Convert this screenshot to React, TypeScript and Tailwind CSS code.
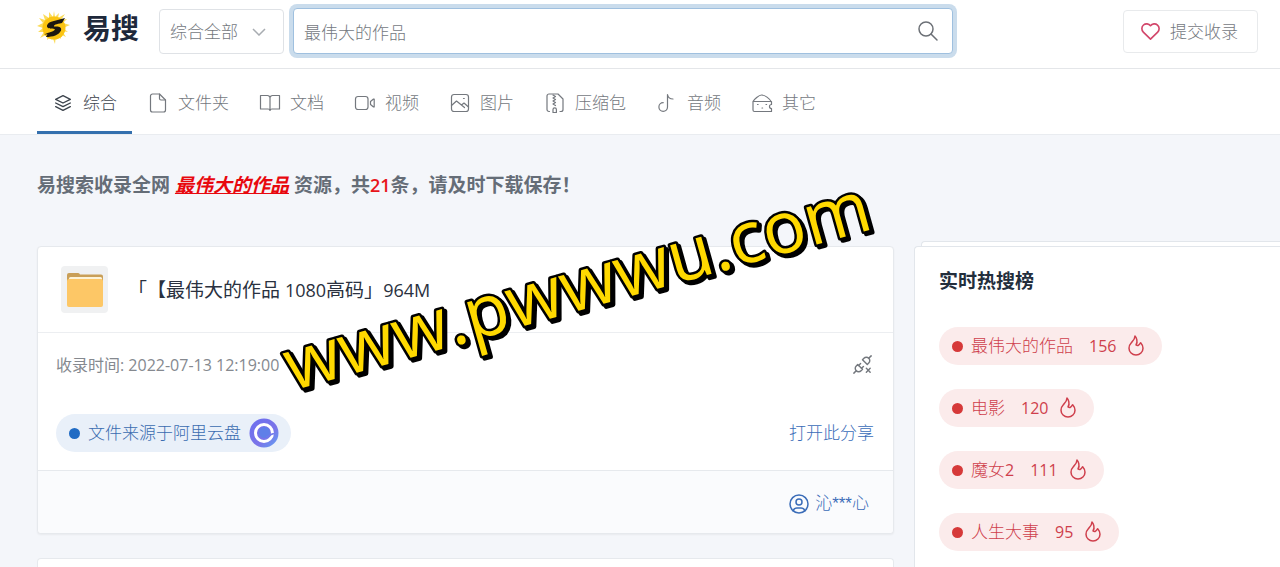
import React from "react";
import {
  TbFlame,
  TbHeart,
  TbPlugConnectedX,
  TbSearch,
  TbStack2,
  TbUserCircle,
} from "react-icons/tb";

const Line = ({ children }: { children: React.ReactNode }) => (
  <svg
    viewBox="0 0 24 24"
    className="h-6 w-6 -mx-0.5 shrink-0"
    fill="none"
    stroke="currentColor"
    strokeWidth="1.2"
    strokeLinecap="round"
    strokeLinejoin="round"
    aria-hidden="true"
  >
    {children}
  </svg>
);

const tabs: { label: string; icon: React.ReactNode }[] = [
  { label: "综合", icon: <TbStack2 size={22} strokeWidth={1.5} className="-mx-px shrink-0" /> },
  {
    label: "文件夹",
    icon: (
      <Line>
        <path d="M13.5 3H6.5a2 2 0 0 0-2 2v14a2 2 0 0 0 2 2h11a2 2 0 0 0 2-2V9z" />
        <path d="M13.5 3v4.500a1.500 1.500 0 0 0 1.500 1.500h4.500" />
      </Line>
    ),
  },
  {
    label: "文档",
    icon: (
      <Line>
        <path d="M2.500 4.500h7a2.500 2.500 0 0 1 2.500 2.500v12.500a2 2 0 0 0-2-1.500H2.500zM21.500 4.500h-7A2.500 2.500 0 0 0 12 7v12.500a2 2 0 0 1 2-1.500h7.500z" />
      </Line>
    ),
  },
  {
    label: "视频",
    icon: (
      <Line>
        <rect x="2.500" y="5.500" width="12.500" height="13" rx="2.500" />
        <path d="M17.500 10.500l3-2.500h.7v8h-.7l-3-2.500z" />
      </Line>
    ),
  },
  {
    label: "图片",
    icon: (
      <Line>
        <rect x="3.500" y="3.500" width="17" height="17" rx="2.500" />
        <path d="M3.500 14.500l5-4.500 8 6.500M13.500 14l2.500-2 4.500 4" />
        <path d="M15.500 7.500h.8" />
      </Line>
    ),
  },
  {
    label: "压缩包",
    icon: (
      <Line>
        <path d="M6.500 20.500h-.5a2 2 0 0 1-2-2V5a2 2 0 0 1 2-2h9l5 5v10.500a2 2 0 0 1-2 2h-1" />
        <path d="M10 4l2.500 1.500L10 7l2.500 1.500L10 10l2.500 1.500L10 13l2.500 1.500" />
        <path d="M10 21.500v-3a1.700 1.700 0 0 1 3.400 0v3z" />
      </Line>
    ),
  },
  {
    label: "音频",
    icon: (
      <Line>
        <path d="M12.500 16a4.300 4.300 0 1 1-4.300-4.300M12.500 16V3.500c.5 3 2.500 4.500 5.500 4.500" />
      </Line>
    ),
  },
  {
    label: "其它",
    icon: (
      <Line>
        <path d="M3 10.500c1-2 6-6.500 8.500-6.500 3.500 0 8 3.500 9.500 6.500M3 10.500h18.500v3a2 2 0 0 0 0 4v3H4.500A1.500 1.500 0 0 1 3 19z" />
        <path d="M7.500 13.500h.6M12 17h.6M16 13.500h.6" />
      </Line>
    ),
  },
];

const hot = [
  { name: "最伟大的作品", count: 156 },
  { name: "电影", count: 120 },
  { name: "魔女", part: 2, count: 111 },
  { name: "人生大事", count: 95 },
];

function Logo() {
  return (
    <svg viewBox="0 0 34 34" className="h-[34px] w-[34px]" aria-hidden="true">
      <path
        fill="#fbdc5a"
        d="M17 0l1 6 4-4-1 5 7-4-4 6 6-1-4 4 7 2-7 3 5 4-6-1 4 6-6-3 1 5-5-4-1 9-3-8-5 4 1-6-8 4 4-6-6 0 5-4-6-2 6-3-4-5 6 2-2-6 6 4 0-6 4 5z"
      />
      <circle cx="17" cy="17" r="11.500" fill="#fbc412" />
      <path
        fill="#1c1710"
        d="M28 7L15 10.500c-4 1-6 4-4.500 6 1.500 2 6 .5 7.500 2-1.500 2.500-6 2.500-11 5l3.500-.3-1.500 2.800c7 0 13-2 15-6.500 1-3.500-2-4.500-7-4-.5-1.500 2-2.500 8-3.500z"
      />
    </svg>
  );
}

function FolderIcon() {
  return (
    <svg viewBox="0 0 47 47" className="h-[47px] w-[47px] shrink-0 rounded-sm bg-[#f0f1f2]" aria-hidden="true">
      <path fill="#c99f58" d="M6 9a2 2 0 0 1 2-2h9a2 2 0 0 1 2 1.500h21a2 2 0 0 1 2 2V16H6z" />
      <rect x="8" y="11" width="33" height="6" rx="1.500" fill="#fdf3d8" />
      <rect x="6" y="13" width="36" height="28" rx="2" fill="#fdc766" />
    </svg>
  );
}

function DriveIcon() {
  return (
    <svg viewBox="0 0 30 30" className="h-[30px] w-[30px]" aria-hidden="true">
      <defs>
        <linearGradient id="drive" x1="0" y1="0" x2="1" y2="1">
          <stop offset="0" stopColor="#6b6ff0" />
          <stop offset="0.6" stopColor="#7b74e8" />
          <stop offset="1" stopColor="#5fa2f4" />
        </linearGradient>
      </defs>
      <circle cx="15" cy="15" r="14.500" fill="url(#drive)" />
      <circle cx="15" cy="15" r="8.500" fill="none" stroke="#fff" strokeWidth="3" />
      <circle cx="15.500" cy="14.500" r="5.500" fill="#5f7fe8" />
      <path d="M17 18.500c2 .5 3.500 0 5-2l3-1" fill="none" stroke="#6f78ea" strokeWidth="1.800" />
    </svg>
  );
}

export default function App() {
  return (
    <div className="relative flex min-h-screen flex-col overflow-hidden bg-[#f4f6fa] font-['Open_Sans','Noto_Sans_CJK_SC',sans-serif] text-[17px] leading-6 text-[#74787e]">
      <header className="flex h-[69px] shrink-0 items-start border-b border-[#e4e6e9] bg-white pr-[22px] pl-[37px]">
        <a href="#" className="mt-2.5 flex w-[122px] items-center gap-3 text-[#1e293b]">
          <Logo />
          <span className="text-[28px] leading-9 font-bold">易搜</span>
        </a>
        <div className="relative mt-[9px] flex h-[45px] w-[125px] items-center">
          <select
            aria-label="分类"
            className="h-full w-full appearance-none rounded border border-[#dfe2e6] bg-white px-2.5 font-light outline-none"
          >
            <option>综合全部</option>
          </select>
          <svg viewBox="0 0 14 8" className="pointer-events-none absolute right-[18px] h-2 w-3.5" fill="none" stroke="#a8acb1" strokeWidth="1.500" aria-hidden="true">
            <path d="M1 1l6 6 6-6" />
          </svg>
        </div>
        <form className="mt-2 ml-[9px] flex h-[46px] w-[660px] items-center rounded border border-[#9fc0df] bg-white pr-3 ring-4 ring-[#cadcec]">
          <input
            aria-label="搜索"
            defaultValue="最伟大的作品"
            className="h-full min-w-0 flex-1 bg-transparent px-2.5 font-light outline-none"
          />
          <button type="button" aria-label="搜索" className="text-[#6c7076]">
            <TbSearch size={24} strokeWidth={1.5} />
          </button>
        </form>
        <button type="button" className="mt-2.5 ml-auto flex h-[43px] w-[135px] items-center justify-center gap-2 rounded border border-[#e8eaec] bg-white pr-1 font-light">
          <TbHeart size={23} strokeWidth={1.7} className="text-[#d2466a]" />
          提交收录
        </button>
      </header>

      <nav className="flex h-[66px] shrink-0 border-b border-[#e9ecf0] bg-white pl-[37px]">
        {tabs.map((t, i) => (
          <a
            key={t.label}
            href="#"
            className={
              i === 0
                ? "flex items-center gap-2.5 border-b-[3px] border-[#3470ae] pt-1.5 pr-[15px] pl-4 font-light text-[#3c434c]"
                : "flex items-center gap-2.5 border-b-[3px] border-transparent pt-1.5 pr-[15px] pl-4 font-light"
            }
          >
            {t.icon}
            {t.label}
          </a>
        ))}
      </nav>

      <main className="flex flex-1 flex-col pl-[37px]">
        <h1 className="py-9 text-[19px] leading-7 font-bold text-[#656d77]">
          易搜索收录全网 <em className="text-[#e8080e] underline">最伟大的作品</em> 资源，共
          <span className="text-lg font-semibold text-[#e8141a]">21</span>条，请及时下载保存！
        </h1>

        <div className="mt-[11px] grid flex-1 grid-cols-[857fr_366fr] gap-5">
          <div className="flex flex-col gap-6">
            <article className="rounded border border-[#e6e9ed] bg-white shadow-xs">
              <div className="flex h-[86px] items-center gap-5 border-b border-[#eceef1] pl-[23px]">
                <FolderIcon />
                <h2 className="text-[19px] font-normal text-[#2a3140] [text-spacing-trim:space-all]">
                  「【最伟大的作品 <span className="text-lg font-medium">1080</span>高码」
                  <span className="text-lg font-medium">964M</span>
                </h2>
              </div>
              <div className="pr-[19px] pb-[18px] pl-[18px]">
                <div className="flex h-[63px] items-center justify-between">
                  <p className="text-base font-normal text-[#85898f]">收录时间: 2022-07-13 12:19:00</p>
                  <TbPlugConnectedX size={23} strokeWidth={1.5} />
                </div>
                <div className="mt-[18px] flex items-center justify-between">
                  <span className="flex h-[38px] items-center gap-2 rounded-full bg-[#e9f0f9] pr-3 pl-[13px] font-light text-[#3a6cb0]">
                    <span className="h-[11px] w-[11px] rounded-full bg-[#206bc4]" />
                    文件来源于阿里云盘
                    <DriveIcon />
                  </span>
                  <a href="#" className="font-light text-[#3a6cb8]">打开此分享</a>
                </div>
              </div>
              <div className="flex h-[63px] items-center justify-end gap-1 rounded-b border-t border-[#e6e9ed] bg-[#fafbfd] pt-1 pr-6 font-['Liberation_Sans','Noto_Sans_CJK_SC',sans-serif] font-light text-[#3a6cb8]">
                <TbUserCircle size={24} strokeWidth={1.5} />
                沁***心
              </div>
            </article>
            <article className="min-h-2 flex-1 rounded-t border border-b-0 border-[#e6e9ed] bg-white" />
          </div>

          <aside className="relative rounded-tl border-t border-l border-[#e2e6eb] bg-white pt-5 pb-4 pl-6">
            <div className="absolute -top-1.5 right-0 left-1.5 h-[5px] rounded-tl border-t border-l border-[#e2e6eb] bg-white" />
            <h3 className="text-[19px] leading-7 font-bold text-[#232e3c]">实时热搜榜</h3>
            <ul className="mt-8 flex flex-col items-start gap-6">
              {hot.map((h) => (
                <li key={h.name} className="flex h-[38px] items-center rounded-full bg-[#fbebeb] pr-3.5 pl-[13px] text-[#cf3f4c]">
                  <span className="mr-2 h-[11px] w-[11px] rounded-full bg-[#d63939]" />
                  <span className="font-light">{h.name}</span>
                  {h.part && <span className="text-base font-medium">{h.part}</span>}
                  <span className="mr-2 ml-4 text-base font-medium">{h.count}</span>
                  <TbFlame size={24} strokeWidth={1.5} />
                </li>
              ))}
            </ul>
          </aside>
        </div>
      </main>

      <svg viewBox="0 0 680 300" className="pointer-events-none absolute top-[140px] left-[260px] w-[680px]">
        <g transform="translate(32 251) rotate(-15.600)" fontSize="72" fontWeight="500" strokeLinejoin="round">
          <text x="2" y="3" fill="#000" stroke="#000" strokeWidth="5">www.pwwwu.com</text>
          <text fill="#ffd900" stroke="#000" strokeWidth="5" style={{ paintOrder: "stroke" }}>www.pwwwu.com</text>
        </g>
      </svg>
    </div>
  );
}
